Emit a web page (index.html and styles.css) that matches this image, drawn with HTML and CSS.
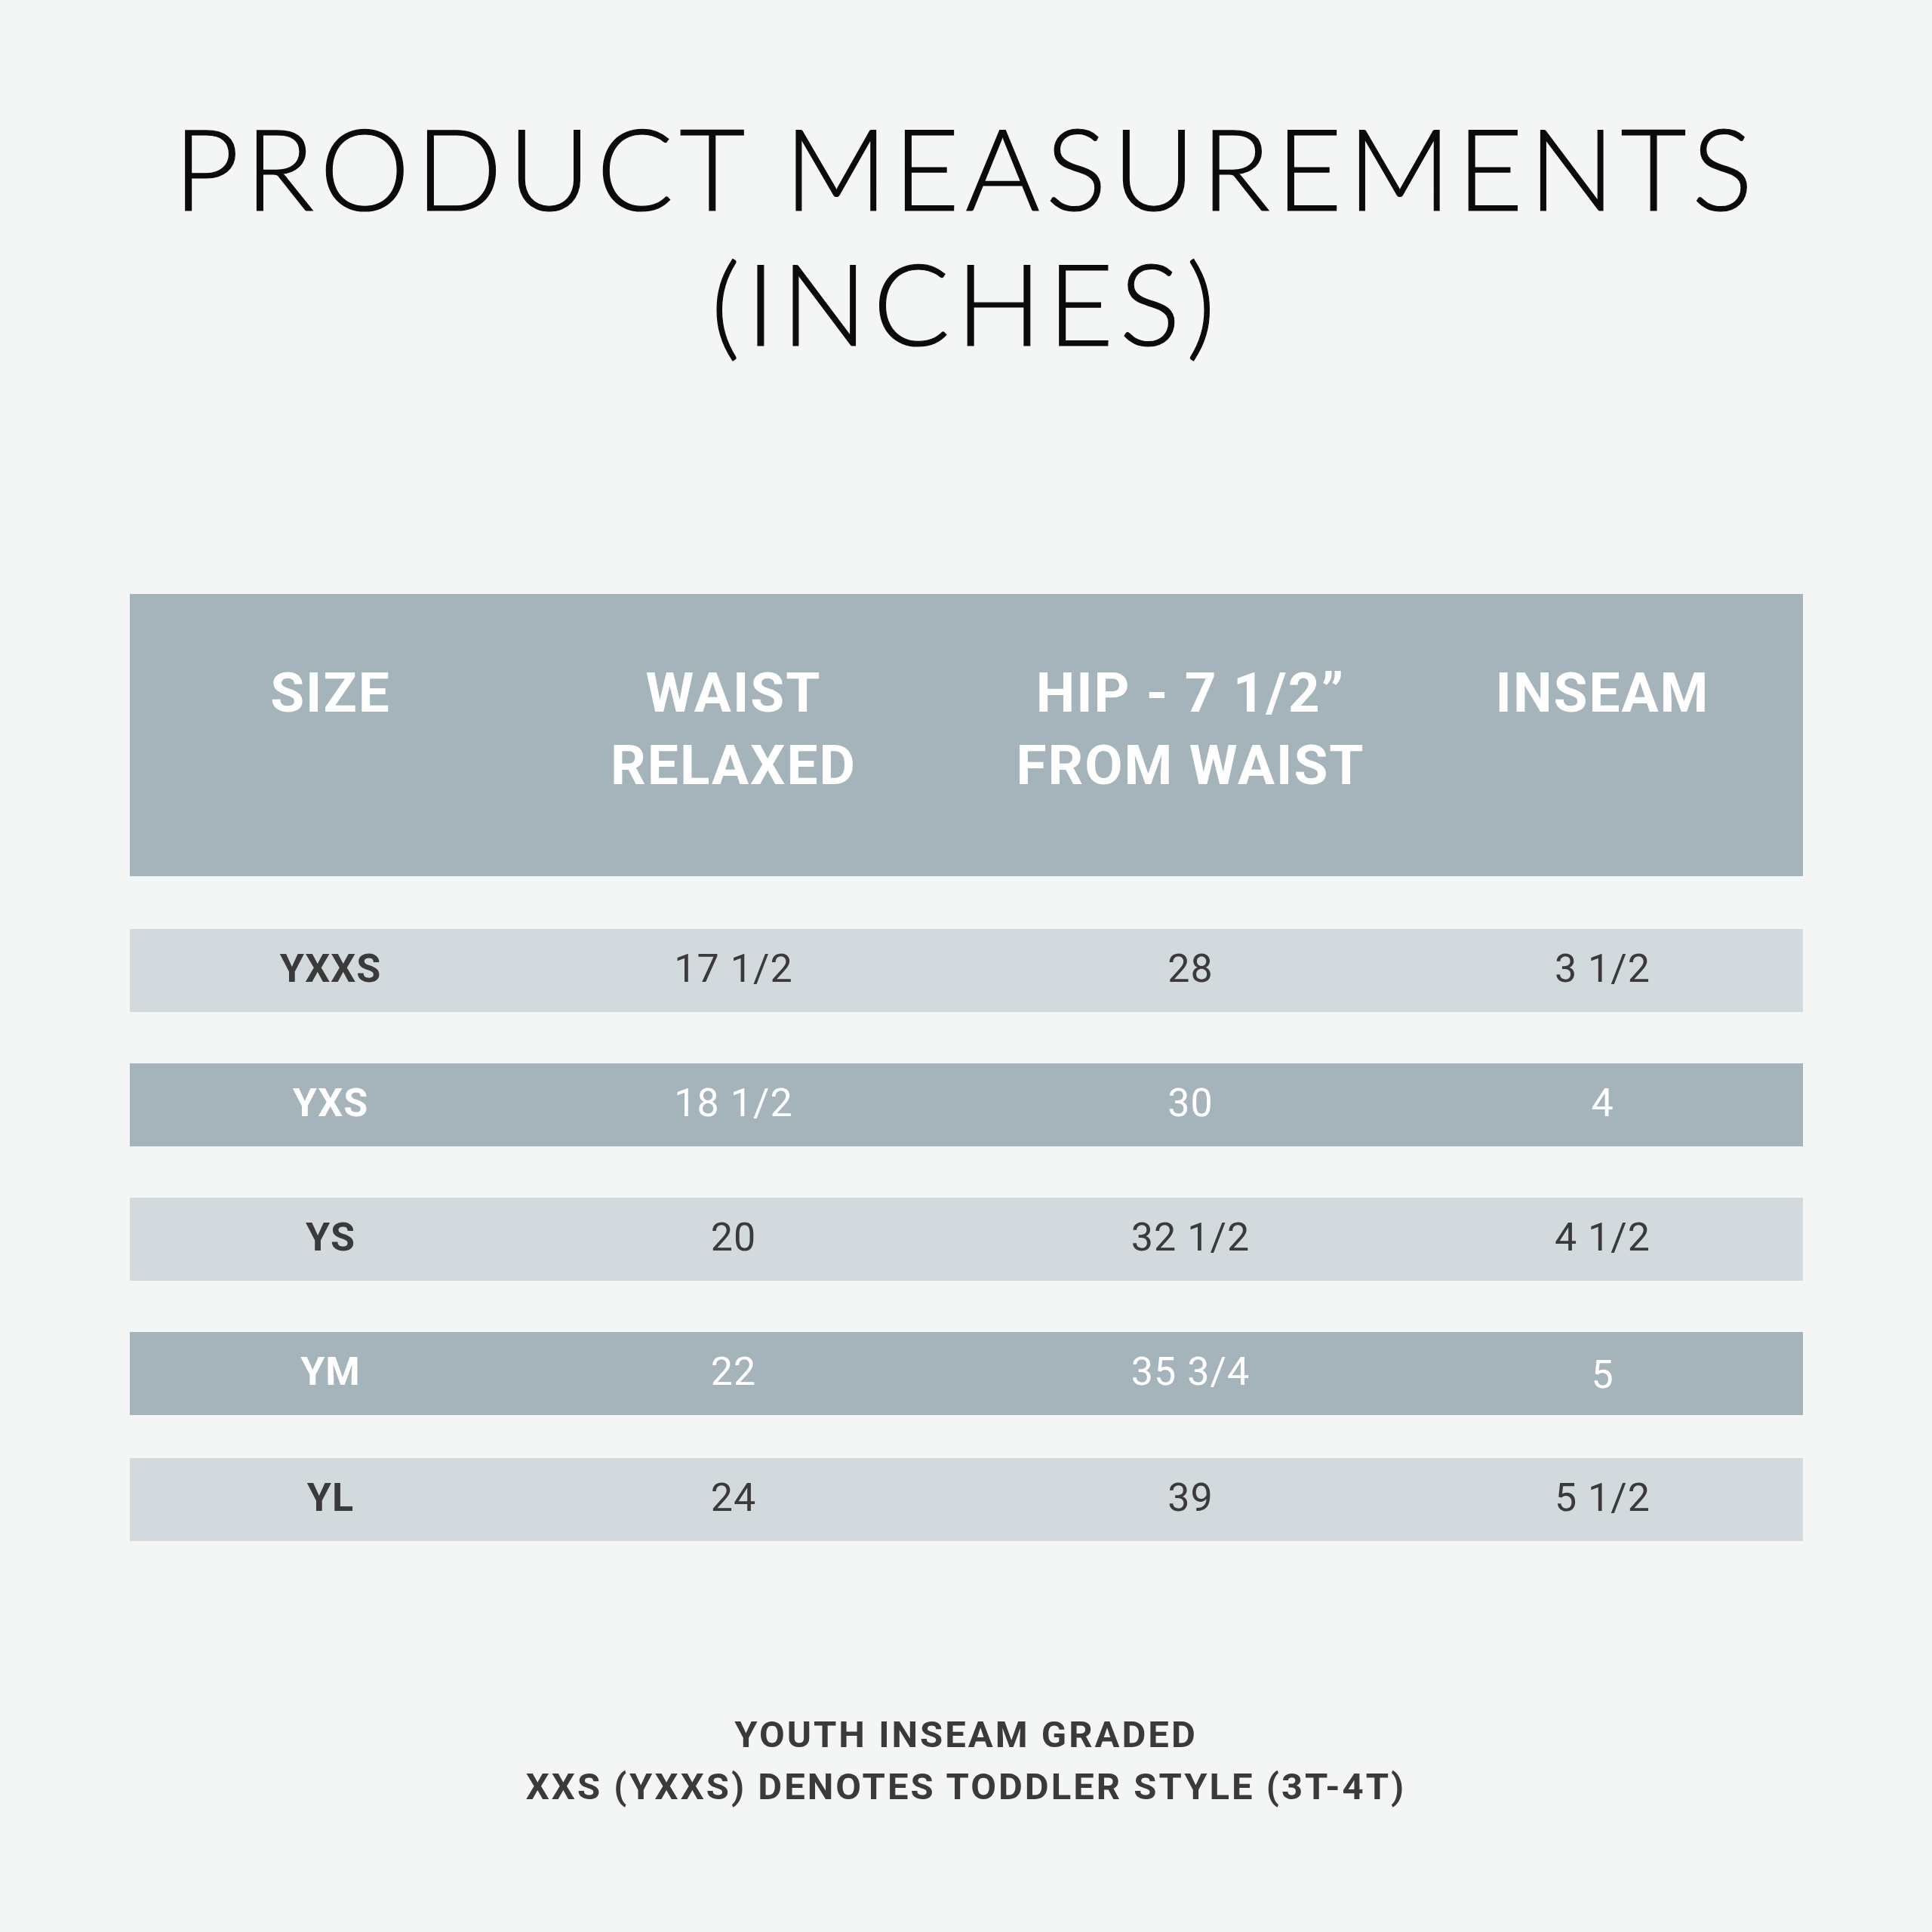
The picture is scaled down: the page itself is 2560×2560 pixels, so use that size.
FILE: index.html
```html
<!DOCTYPE html>
<html lang="en">
<head>
<meta charset="utf-8">
<title>Product Measurements</title>
<link rel="stylesheet" href="styles.css">
</head>
<body>
<main class="page">
  <h1 class="title">PRODUCT MEASUREMENTS<br>(INCHES)</h1>
  <section class="chart">
    <div class="row head">
      <div class="cell">SIZE</div>
      <div class="cell">WAIST<br>RELAXED</div>
      <div class="cell">HIP - 7 1/2”<br>FROM WAIST</div>
      <div class="cell">INSEAM</div>
    </div>
    <div class="row light">
      <div class="cell size">YXXS</div>
      <div class="cell">17 1/2</div>
      <div class="cell">28</div>
      <div class="cell">3 1/2</div>
    </div>
    <div class="row dark">
      <div class="cell size">YXS</div>
      <div class="cell">18 1/2</div>
      <div class="cell">30</div>
      <div class="cell">4</div>
    </div>
    <div class="row light">
      <div class="cell size">YS</div>
      <div class="cell">20</div>
      <div class="cell">32 1/2</div>
      <div class="cell">4 1/2</div>
    </div>
    <div class="row dark">
      <div class="cell size">YM</div>
      <div class="cell">22</div>
      <div class="cell">35 3/4</div>
      <div class="cell low">5</div>
    </div>
    <div class="row light last">
      <div class="cell size">YL</div>
      <div class="cell">24</div>
      <div class="cell">39</div>
      <div class="cell">5 1/2</div>
    </div>
  </section>
  <p class="note">YOUTH INSEAM GRADED<br>XXS (YXXS) DENOTES TODDLER STYLE (3T-4T)</p>
</main>
</body>
</html>
```
FILE: styles.css
```css
html, body {
  margin: 0;
  padding: 0;
  background: #f4f6f5;
}
.page {
  width: 2560px;
  height: 2560px;
  display: flex;
  flex-direction: column;
  align-items: center;
  font-family: Roboto, "Liberation Sans", sans-serif;
}
.title {
  margin: 131px 0 0 0;
  font-family: Lato, "Open Sans", sans-serif;
  font-weight: 300;
  font-size: 151px;
  line-height: 179px;
  letter-spacing: 7.6px;
  color: #0b0b0b;
  -webkit-text-stroke: 1.2px #0b0b0b;
  text-align: center;
}
.chart {
  margin-top: 298px;
  width: 2217px;
  display: flex;
  flex-direction: column;
  gap: 68px;
}
.row {
  display: grid;
  grid-template-columns: 533px 535px 676px 416px;
  height: 110px;
  box-sizing: border-box;
  padding-bottom: 5px;
  align-items: center;
  text-align: center;
  font-size: 52px;
  letter-spacing: 1px;
}
.row.head {
  height: 374px;
  padding-top: 83px;
  padding-bottom: 0;
  align-items: start;
  background: #a5b3ba;
  color: #ffffff;
  font-weight: 700;
  font-size: 73px;
  line-height: 96px;
  letter-spacing: 2px;
  margin-bottom: 2px;
}
.row.light {
  background: #d3dadd;
  color: #3a3a3a;
}
.row.dark {
  background: #a5b3ba;
  color: #ffffff;
}
.row.last {
  margin-top: -11px;
}
.cell.size {
  font-weight: 700;
}
.cell.low {
  padding-top: 8px;
}
.note {
  margin: 222px 0 0 0;
  font-weight: 700;
  font-size: 49px;
  line-height: 69px;
  letter-spacing: 3px;
  color: #3a3a3a;
  text-align: center;
}
```
